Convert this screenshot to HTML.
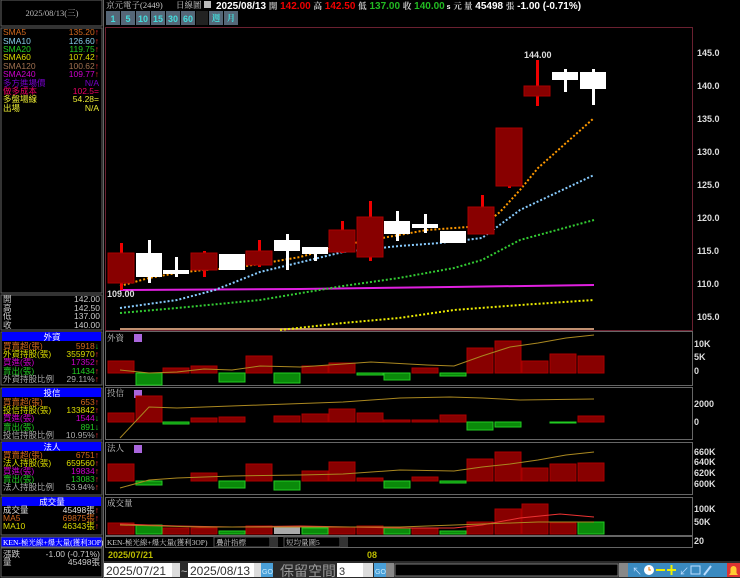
<!DOCTYPE html>
<html><head><meta charset="utf-8"><style>
html,body{margin:0;padding:0;background:#000;width:740px;height:578px;overflow:hidden}
svg{display:block}
text{font-family:"Liberation Sans","Noto Sans CJK TC",sans-serif}
.s{font-family:"Liberation Serif","Noto Serif CJK SC",serif;font-size:8.5px}
.k{font-family:"Liberation Serif","Noto Serif CJK SC",serif;font-size:7.5px}
.ax{font-size:9px;fill:#ddd;font-weight:bold}
</style></head><body>
<svg width="740" height="578" viewBox="0 0 740 578">
<rect width="740" height="578" fill="#000"/>
<!-- LEFT PANEL -->
<rect x="1" y="0" width="101" height="26" fill="#000" stroke="#666"/>
<text class="s" x="52" y="16" fill="#bbb" text-anchor="middle">2025/08/13(三)</text>
<rect x="1" y="28" width="101" height="265" fill="#000" stroke="#666"/>
<g class="s">
<text x="3" y="35" fill="#d2691e">SMA5</text><text x="99" y="35" fill="#d2691e" text-anchor="end">135.20<tspan fill="#f33">↑</tspan></text>
<text x="3" y="44" fill="#87ceeb">SMA10</text><text x="99" y="44" fill="#87ceeb" text-anchor="end">126.60<tspan fill="#f33">↑</tspan></text>
<text x="3" y="52" fill="#2c2">SMA20</text><text x="99" y="52" fill="#2c2" text-anchor="end">119.75<tspan fill="#f33">↑</tspan></text>
<text x="3" y="60" fill="#dd0">SMA60</text><text x="99" y="60" fill="#dd0" text-anchor="end">107.42<tspan fill="#f33">↑</tspan></text>
<text x="3" y="69" fill="#a07050">SMA120</text><text x="99" y="69" fill="#a07050" text-anchor="end">100.62<tspan fill="#f33">↑</tspan></text>
<text x="3" y="77" fill="#c0c">SMA240</text><text x="99" y="77" fill="#c0c" text-anchor="end">109.77<tspan fill="#f33">↑</tspan></text>
<text x="3" y="86" fill="#70c">多方進場價</text><text x="99" y="86" fill="#70c" text-anchor="end">N/A</text>
<text x="3" y="94" fill="#e06">做多成本</text><text x="99" y="94" fill="#e06" text-anchor="end">102.5=</text>
<text x="3" y="102" fill="#ee3">多盤場線</text><text x="99" y="102" fill="#ee3" text-anchor="end">54.28=</text>
<text x="3" y="111" fill="#ee3">出場</text><text x="99" y="111" fill="#ee3" text-anchor="end">N/A</text>
</g>
<rect x="1" y="295" width="101" height="35" fill="#000" stroke="#666"/>
<g class="s" fill="#ccc">
<text x="3" y="302">開</text><text x="100" y="302" text-anchor="end">142.00</text>
<text x="3" y="311">高</text><text x="100" y="311" text-anchor="end">142.50</text>
<text x="3" y="319">低</text><text x="100" y="319" text-anchor="end">137.00</text>
<text x="3" y="328">收</text><text x="100" y="328" text-anchor="end">140.00</text>
</g>
<!-- 外資 -->
<rect x="1" y="332" width="101" height="53" fill="#000" stroke="#666"/>
<rect x="2" y="332" width="99" height="9" fill="#0000ff"/>
<g class="s">
<text x="52" y="340" fill="#fff" text-anchor="middle">外資</text>
<text x="3" y="349" fill="#d2691e">買賣超(張)</text><text x="99" y="349" fill="#d2691e" text-anchor="end">5918<tspan fill="#2c2">↓</tspan></text>
<text x="3" y="357" fill="#dd0">外資持股(張)</text><text x="99" y="357" fill="#dd0" text-anchor="end">355970<tspan fill="#f33">↑</tspan></text>
<text x="3" y="365" fill="#c0c">買進(張)</text><text x="99" y="365" fill="#c0c" text-anchor="end">17352<tspan fill="#f33">↑</tspan></text>
<text x="3" y="374" fill="#2c2">賣出(張)</text><text x="99" y="374" fill="#2c2" text-anchor="end">11434<tspan fill="#f33">↑</tspan></text>
<text x="3" y="382" fill="#aaa">外資持股比例</text><text x="99" y="382" fill="#aaa" text-anchor="end">29.11%<tspan fill="#f33">↑</tspan></text>
</g>
<!-- 投信 -->
<rect x="1" y="388" width="101" height="52" fill="#000" stroke="#666"/>
<rect x="2" y="388" width="99" height="9" fill="#0000ff"/>
<g class="s">
<text x="52" y="396" fill="#fff" text-anchor="middle">投信</text>
<text x="3" y="405" fill="#d2691e">買賣超(張)</text><text x="99" y="405" fill="#d2691e" text-anchor="end">653<tspan fill="#f33">↑</tspan></text>
<text x="3" y="413" fill="#dd0">投信持股(張)</text><text x="99" y="413" fill="#dd0" text-anchor="end">133842<tspan fill="#f33">↑</tspan></text>
<text x="3" y="421" fill="#c0c">買進(張)</text><text x="99" y="421" fill="#c0c" text-anchor="end">1544<tspan fill="#2c2">↓</tspan></text>
<text x="3" y="430" fill="#2c2">賣出(張)</text><text x="99" y="430" fill="#2c2" text-anchor="end">891<tspan fill="#2c2">↓</tspan></text>
<text x="3" y="438" fill="#aaa">投信持股比例</text><text x="99" y="438" fill="#aaa" text-anchor="end">10.95%<tspan fill="#f33">↑</tspan></text>
</g>
<!-- 法人 -->
<rect x="1" y="442" width="101" height="53" fill="#000" stroke="#666"/>
<rect x="2" y="442" width="99" height="9" fill="#0000ff"/>
<g class="s">
<text x="52" y="450" fill="#fff" text-anchor="middle">法人</text>
<text x="3" y="458" fill="#d2691e">買賣超(張)</text><text x="99" y="458" fill="#d2691e" text-anchor="end">6751<tspan fill="#f33">↑</tspan></text>
<text x="3" y="466" fill="#dd0">法人持股(張)</text><text x="99" y="466" fill="#dd0" text-anchor="end">659560<tspan fill="#f33">↑</tspan></text>
<text x="3" y="474" fill="#c0c">買進(張)</text><text x="99" y="474" fill="#c0c" text-anchor="end">19834<tspan fill="#f33">↑</tspan></text>
<text x="3" y="482" fill="#2c2">賣出(張)</text><text x="99" y="482" fill="#2c2" text-anchor="end">13083<tspan fill="#f33">↑</tspan></text>
<text x="3" y="490" fill="#aaa">法人持股比例</text><text x="99" y="490" fill="#aaa" text-anchor="end">53.94%<tspan fill="#f33">↑</tspan></text>
</g>
<!-- 成交量 -->
<rect x="1" y="497" width="101" height="38" fill="#000" stroke="#666"/>
<rect x="2" y="497" width="99" height="9" fill="#0000ff"/>
<g class="s">
<text x="52" y="505" fill="#fff" text-anchor="middle">成交量</text>
<text x="3" y="513" fill="#ddd">成交量</text><text x="99" y="513" fill="#ddd" text-anchor="end">45498張<tspan fill="#f33">↑</tspan></text>
<text x="3" y="521" fill="#d2691e">MA5</text><text x="99" y="521" fill="#d2691e" text-anchor="end">69875張<tspan fill="#f33">↑</tspan></text>
<text x="3" y="529" fill="#dd0">MA10</text><text x="99" y="529" fill="#dd0" text-anchor="end">46343張<tspan fill="#f33">↑</tspan></text>
</g>
<rect x="1" y="537" width="101" height="10" fill="#0000ff" stroke="#666"/>
<text class="k" x="3" y="545" fill="#fff">KEN-極光線+爆大量(獲利3OP)</text>
<rect x="1" y="548" width="101" height="29" fill="#000" stroke="#666"/>
<g class="s" fill="#ccc">
<text x="3" y="557">漲跌</text><text x="100" y="557" text-anchor="end">-1.00 (-0.71%)</text>
<text x="3" y="565">量</text><text x="100" y="565" text-anchor="end">45498張</text>
</g>
<line x1="103.5" y1="0" x2="103.5" y2="578" stroke="#666"/>

<!-- TOP BAR -->
<text class="s" x="106" y="8" fill="#ccc">京元電子(2449)</text>
<text class="s" x="176" y="8" fill="#ccc">日線圖</text>
<rect x="204" y="1" width="7" height="7" fill="#bbb"/>
<text x="216" y="9" fill="#fff" font-size="10" font-weight="bold">2025/08/13 <tspan class="s" fill="#ccc">開</tspan> <tspan fill="#e00">142.00</tspan> <tspan class="s" fill="#ccc">高</tspan> <tspan fill="#e00">142.50</tspan> <tspan class="s" fill="#ccc">低</tspan> <tspan fill="#2b2">137.00</tspan> <tspan class="s" fill="#ccc">收</tspan> <tspan fill="#2b2">140.00</tspan><tspan font-size="7"> s</tspan> <tspan class="s" fill="#ccc">元 量</tspan> 45498 <tspan class="s" fill="#ccc">張</tspan>  -1.00 (-0.71%)</text>
<g font-size="9" font-weight="bold" fill="#4dd">
<rect x="106" y="11" width="14" height="14" fill="#556677"/><text x="113" y="22" text-anchor="middle">1</text>
<rect x="121" y="11" width="14" height="14" fill="#556677"/><text x="128" y="22" text-anchor="middle">5</text>
<rect x="136" y="11" width="14" height="14" fill="#556677"/><text x="143" y="22" text-anchor="middle">10</text>
<rect x="151" y="11" width="14" height="14" fill="#556677"/><text x="158" y="22" text-anchor="middle">15</text>
<rect x="166" y="11" width="14" height="14" fill="#556677"/><text x="173" y="22" text-anchor="middle">30</text>
<rect x="181" y="11" width="14" height="14" fill="#556677"/><text x="188" y="22" text-anchor="middle">60</text>
<rect x="196" y="11" width="12" height="14" fill="#222"/>
<rect x="209" y="11" width="14" height="14" fill="#556677"/><text class="s" x="216" y="21" text-anchor="middle">週</text>
<rect x="224" y="11" width="14" height="14" fill="#556677"/><text class="s" x="231" y="21" text-anchor="middle">月</text>
</g>

<!-- MAIN CHART -->
<rect x="105.5" y="27.5" width="587" height="303" fill="none" stroke="#6a2030"/>
<g class="ax">
<text x="697" y="56">145.0</text><text x="697" y="89">140.0</text><text x="697" y="122">135.0</text><text x="697" y="155">130.0</text><text x="697" y="188">125.0</text><text x="697" y="221">120.0</text><text x="697" y="254">115.0</text><text x="697" y="287">110.0</text><text x="697" y="320">105.0</text>
</g>
<line x1="120" y1="329" x2="594" y2="329" stroke="#c09070" stroke-width="2"/>
<polyline points="120,290 300,289 450,287 594,285" fill="none" stroke="#e020e0" stroke-width="2"/>
<polyline points="280,330 343,323 399,318 454,310 520,305 594,300" fill="none" stroke="#ee0" stroke-width="2" stroke-dasharray="2,2"/>
<polyline points="120,313 177,308 260,300 343,286 399,278 454,268 482,260 520,240 594,220" fill="none" stroke="#3c3" stroke-width="2" stroke-dasharray="2,2"/>
<polyline points="120,308 177,300 215,290 260,272 343,252 399,246 440,243 482,238 520,210 594,175" fill="none" stroke="#8cf" stroke-width="2" stroke-dasharray="2,2"/>
<polyline points="120,286 149,278 177,273 204,270 232,268 260,264 300,257 343,245 371,240 427,230 482,226 500,212 520,190 538,168 566,143 594,118" fill="none" stroke="#f90" stroke-width="2" stroke-dasharray="2,2"/>
<g>
<rect x="120" y="243" width="3" height="47" fill="#e00"/><rect x="108" y="253" width="26" height="30" fill="#800" stroke="#a00"/>
<rect x="148" y="240" width="3" height="43" fill="#fff"/><rect x="136" y="253" width="26" height="24" fill="#fff"/>
<rect x="175" y="257" width="3" height="20" fill="#fff"/><rect x="163" y="270" width="26" height="4" fill="#fff"/>
<rect x="203" y="251" width="3" height="26" fill="#e00"/><rect x="191" y="253" width="26" height="17" fill="#800" stroke="#a00"/>
<rect x="219" y="254" width="26" height="16" fill="#fff"/>
<rect x="258" y="240" width="3" height="27" fill="#e00"/><rect x="246" y="251" width="26" height="14" fill="#800" stroke="#a00"/>
<rect x="286" y="234" width="3" height="36" fill="#fff"/><rect x="274" y="240" width="26" height="11" fill="#fff"/>
<rect x="314" y="247" width="3" height="14" fill="#fff"/><rect x="302" y="247" width="26" height="7" fill="#fff"/>
<rect x="341" y="221" width="3" height="32" fill="#e00"/><rect x="329" y="230" width="26" height="22" fill="#800" stroke="#a00"/>
<rect x="369" y="201" width="3" height="60" fill="#e00"/><rect x="357" y="217" width="26" height="40" fill="#800" stroke="#a00"/>
<rect x="396" y="211" width="3" height="30" fill="#fff"/><rect x="384" y="221" width="26" height="13" fill="#fff"/>
<rect x="424" y="214" width="3" height="19" fill="#fff"/><rect x="412" y="224" width="26" height="4" fill="#fff"/>
<rect x="440" y="231" width="26" height="12" fill="#fff"/>
<rect x="481" y="195" width="3" height="39" fill="#e00"/><rect x="468" y="207" width="26" height="27" fill="#800" stroke="#a00"/>
<rect x="508" y="128" width="3" height="60" fill="#e00"/><rect x="496" y="128" width="26" height="58" fill="#800" stroke="#a00"/>
<rect x="536" y="60" width="3" height="46" fill="#e00"/><rect x="524" y="86" width="26" height="10" fill="#800" stroke="#a00"/>
<rect x="564" y="69" width="3" height="23" fill="#fff"/><rect x="552" y="72" width="26" height="8" fill="#fff"/>
<rect x="592" y="69" width="3" height="36" fill="#fff"/><rect x="580" y="72" width="26" height="17" fill="#fff"/>
</g>
<text x="524" y="58" fill="#ddd" font-size="9" font-weight="bold">144.00</text>
<text x="107" y="297" fill="#ddd" font-size="9" font-weight="bold">109.00</text>

<!-- 外資 PANEL -->
<rect x="105.5" y="331.5" width="587" height="54" fill="none" stroke="#666"/>
<text class="s" x="107" y="341" fill="#ccc">外資</text>
<rect x="134" y="334" width="8" height="8" fill="#a6d"/>
<g fill="#800" stroke="#a00">
<rect x="108" y="361" width="26" height="12"/><rect x="163" y="368" width="26" height="5"/><rect x="191" y="366" width="26" height="7"/><rect x="246" y="356" width="26" height="17"/><rect x="302" y="366" width="26" height="7"/><rect x="329" y="363" width="26" height="10"/><rect x="412" y="368" width="26" height="5"/><rect x="467" y="348" width="26" height="25"/><rect x="495" y="341" width="26" height="32"/><rect x="522" y="361" width="26" height="12"/><rect x="550" y="354" width="26" height="19"/><rect x="578" y="356" width="26" height="17"/>
</g>
<g fill="#0a8a0a" stroke="#2c2">
<rect x="136" y="373" width="26" height="12"/><rect x="219" y="373" width="26" height="9"/><rect x="274" y="373" width="26" height="10"/><rect x="357" y="373" width="26" height="2"/><rect x="384" y="373" width="26" height="7"/><rect x="440" y="373" width="26" height="3"/>
</g>
<polyline points="120,370 149,373 177,372 204,369 232,370 260,366 300,367 343,364 371,362 427,365 454,366 482,356 510,347 538,343 566,338 594,335" fill="none" stroke="#aa8820" stroke-width="1"/>
<text class="ax" x="694" y="347">10K</text><text class="ax" x="694" y="360">5K</text><text class="ax" x="694" y="374">0</text>

<!-- 投信 PANEL -->
<rect x="105.5" y="387.5" width="587" height="52" fill="none" stroke="#666"/>
<text class="s" x="107" y="396" fill="#ccc">投信</text>
<rect x="134" y="390" width="8" height="8" fill="#a6d"/>
<g fill="#800" stroke="#a00">
<rect x="108" y="413" width="26" height="9"/><rect x="136" y="396" width="26" height="26"/><rect x="191" y="418" width="26" height="4"/><rect x="219" y="417" width="26" height="5"/><rect x="274" y="416" width="26" height="6"/><rect x="302" y="414" width="26" height="8"/><rect x="329" y="409" width="26" height="13"/><rect x="357" y="413" width="26" height="9"/><rect x="384" y="420" width="26" height="2"/><rect x="412" y="420" width="26" height="2"/><rect x="440" y="415" width="26" height="7"/><rect x="578" y="416" width="26" height="6"/>
</g>
<g fill="#0a8a0a" stroke="#2c2">
<rect x="163" y="422" width="26" height="2"/><rect x="467" y="422" width="26" height="8"/><rect x="495" y="422" width="26" height="5"/><rect x="550" y="422" width="26" height="1"/>
</g>
<polyline points="120,438 149,407 177,408 260,405 343,402 400,398 450,397 482,398 520,400 594,399" fill="none" stroke="#aa8820" stroke-width="1"/>
<text class="ax" x="694" y="407">2000</text><text class="ax" x="694" y="425">0</text>

<!-- 法人 PANEL -->
<rect x="105.5" y="442.5" width="587" height="52" fill="none" stroke="#666"/>
<text class="s" x="107" y="451" fill="#ccc">法人</text>
<rect x="134" y="445" width="8" height="8" fill="#a6d"/>
<g fill="#800" stroke="#a00">
<rect x="108" y="464" width="26" height="17"/><rect x="191" y="473" width="26" height="8"/><rect x="246" y="464" width="26" height="17"/><rect x="302" y="471" width="26" height="10"/><rect x="329" y="462" width="26" height="19"/><rect x="357" y="478" width="26" height="3"/><rect x="412" y="477" width="26" height="4"/><rect x="467" y="459" width="26" height="22"/><rect x="495" y="452" width="26" height="29"/><rect x="522" y="468" width="26" height="13"/><rect x="550" y="464" width="26" height="17"/><rect x="578" y="463" width="26" height="18"/>
</g>
<g fill="#0a8a0a" stroke="#2c2">
<rect x="136" y="481" width="26" height="4"/><rect x="219" y="481" width="26" height="7"/><rect x="274" y="481" width="26" height="9"/><rect x="384" y="481" width="26" height="7"/><rect x="440" y="481" width="26" height="2"/>
</g>
<polyline points="120,488 149,480 177,478 232,476 300,475 343,474 400,470 454,471 482,467 510,464 538,460 566,455 594,452" fill="none" stroke="#aa8820" stroke-width="1"/>
<g class="ax"><text x="694" y="455">660K</text><text x="694" y="465">640K</text><text x="694" y="476">620K</text><text x="694" y="487">600K</text></g>

<!-- VOLUME PANEL -->
<rect x="105.5" y="497.5" width="587" height="38" fill="none" stroke="#666"/>
<text class="s" x="107" y="506" fill="#ccc">成交量</text>
<g fill="#800" stroke="#a00">
<rect x="108" y="523" width="26" height="11"/><rect x="163" y="528" width="26" height="6"/><rect x="191" y="528" width="26" height="6"/><rect x="246" y="526" width="26" height="8"/><rect x="329" y="527" width="26" height="7"/><rect x="357" y="526" width="26" height="8"/><rect x="412" y="528" width="26" height="6"/><rect x="467" y="522" width="26" height="12"/><rect x="495" y="509" width="26" height="25"/><rect x="522" y="504" width="26" height="30"/><rect x="550" y="523" width="26" height="11"/>
</g>
<g fill="#0a8a0a" stroke="#2c2">
<rect x="136" y="525" width="26" height="9"/><rect x="219" y="531" width="26" height="3"/><rect x="302" y="528" width="26" height="6"/><rect x="384" y="528" width="26" height="6"/><rect x="440" y="531" width="26" height="3"/><rect x="578" y="522" width="26" height="12"/>
</g>
<rect x="274" y="526" width="26" height="8" fill="#aaa"/>
<polyline points="120,524 177,526 232,527 300,526 400,528 454,528 482,525 520,518 560,514 594,517" fill="none" stroke="#e33" stroke-width="1"/>
<polyline points="120,525 200,527 300,527 400,527 482,524 538,522 594,522" fill="none" stroke="#aa8820" stroke-width="1"/>
<g class="ax"><text x="694" y="512">100K</text><text x="694" y="525">50K</text><text x="694" y="544">20</text></g>

<!-- selector row -->
<rect x="105.5" y="536.5" width="587" height="11" fill="none" stroke="#666"/>
<text class="k" x="107" y="545" fill="#ccc">KEN-極光線+爆大量(獲利3OP)</text>
<rect x="214" y="537" width="56" height="10" fill="#000" stroke="#555"/><text class="k" x="216" y="545" fill="#ccc">疊計指標</text>
<rect x="270" y="537" width="8" height="10" fill="#333"/>
<rect x="284" y="537" width="56" height="10" fill="#000" stroke="#555"/><text class="k" x="286" y="545" fill="#ccc">短均量圖5</text>
<rect x="340" y="537" width="8" height="10" fill="#333"/>
<text x="108" y="558" fill="#bb0" font-size="9" font-weight="bold">2025/07/21</text>
<text x="367" y="558" fill="#bb0" font-size="9" font-weight="bold">08</text>

<!-- bottom controls -->
<rect x="104" y="561" width="636" height="17" fill="#2a2a2a"/>
<rect x="104" y="563" width="68" height="14" fill="#fff"/>
<text x="106" y="575" fill="#333" font-size="12" font-family="Liberation Serif">2025/07/21</text>
<rect x="172" y="563" width="8" height="14" fill="#ddd"/>
<text x="181" y="575" fill="#ccc" font-size="11">~</text>
<rect x="188" y="563" width="68" height="14" fill="#fff"/>
<text x="190" y="575" fill="#333" font-size="12" font-family="Liberation Serif">2025/08/13</text>
<rect x="254" y="563" width="7" height="14" fill="#ddd"/>
<rect x="261" y="563" width="12" height="14" fill="#4aa0d8"/><text x="262" y="574" fill="#cef" font-size="7">GO</text>
<text x="280" y="576" fill="#999" font-size="14" font-family="Noto Sans CJK TC,sans-serif">保留空間</text>
<rect x="337" y="563" width="26" height="14" fill="#fff"/><text x="339" y="575" fill="#333" font-size="11">3</text>
<rect x="363" y="563" width="10" height="14" fill="#ddd"/>
<rect x="374" y="563" width="12" height="14" fill="#4aa0d8"/><text x="375" y="574" fill="#cef" font-size="7">GO</text>
<rect x="386" y="563" width="8" height="14" fill="#888"/>
<rect x="395" y="564" width="223" height="12" fill="#000" stroke="#777"/>
<rect x="619" y="563" width="9" height="14" fill="#888"/>
<g>
<rect x="628" y="563" width="99" height="14" fill="#3a8ac0"/>
<text x="632" y="575" fill="#bdf" font-size="10">↖</text>
<circle cx="649" cy="570" r="5" fill="#fff"/><path d="M649 567v3h2" stroke="#e70" fill="none"/>
<rect x="656" y="569" width="9" height="2" fill="#ee0"/>
<rect x="667" y="569" width="9" height="2" fill="#ee0"/><rect x="670.5" y="565" width="2" height="10" fill="#ee0"/>
<text x="679" y="575" fill="#bdf" font-size="10">↙</text>
<rect x="691" y="566" width="9" height="8" fill="none" stroke="#bdf"/>
<path d="M704 575l7-9" stroke="#bdf" stroke-width="2"/>
<rect x="727" y="563" width="13" height="14" fill="#d33"/><path d="M729 575h9l-1.5-2v-4a3 3 0 0 0-6 0v4z" fill="#fc3"/>
</g>
</svg>
</body></html>
